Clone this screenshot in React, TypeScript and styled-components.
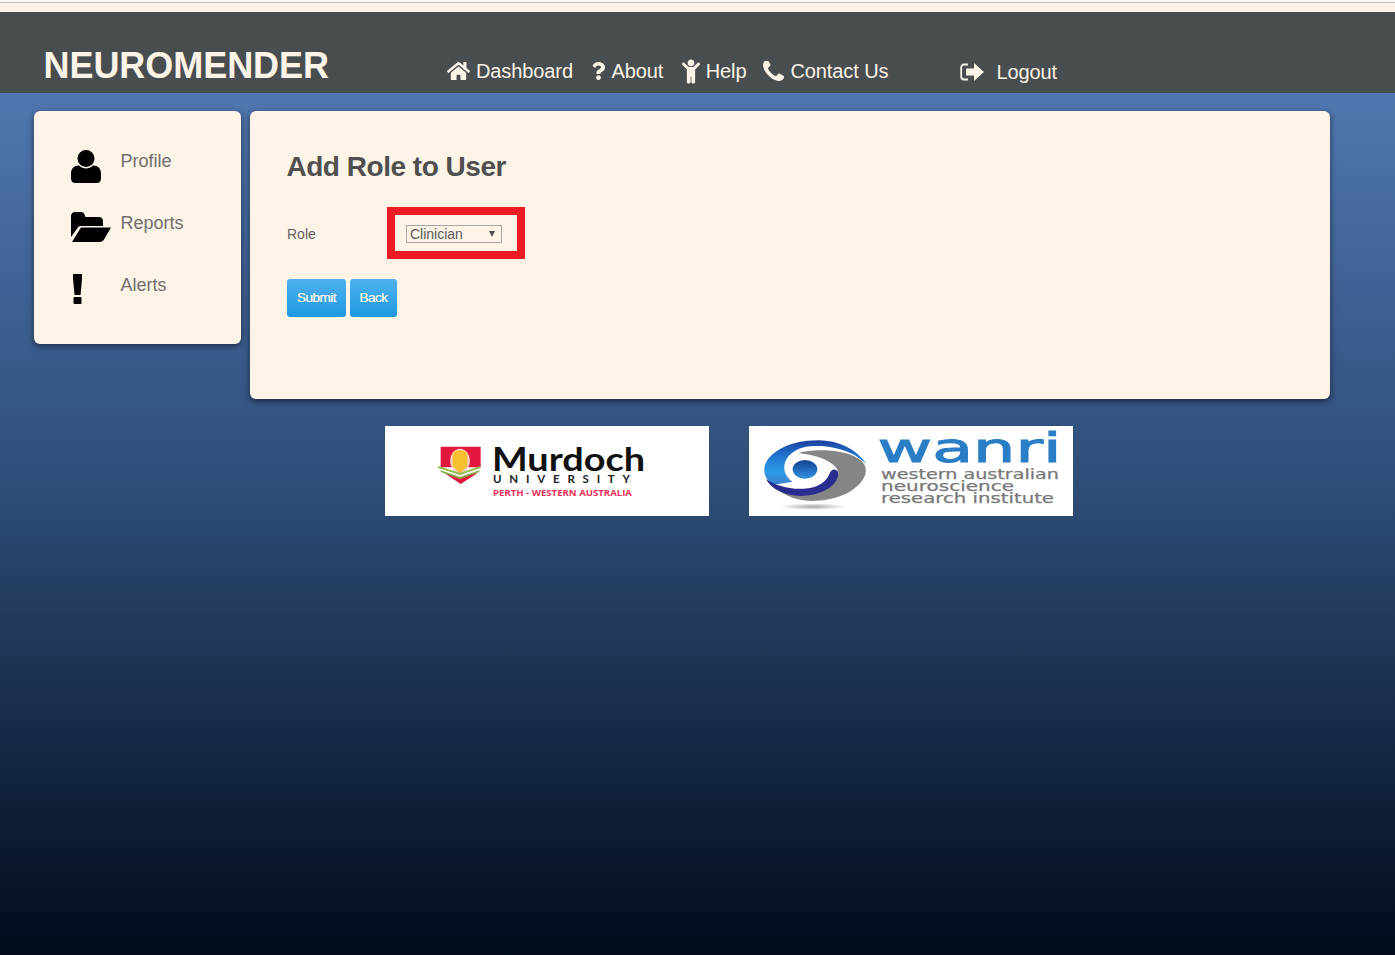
import React from "react";
import styled, { createGlobalStyle } from "styled-components";
import { FaHome, FaQuestion, FaChild } from "react-icons/fa";

const GlobalStyle = createGlobalStyle`
    html, body {
        margin: 0;
        padding: 0;
        height: 100%;
    }
    body {
        font-family: "Liberation Sans", Arial, sans-serif;
    }
`;

const Page = styled.div`
    display: flex;
    flex-direction: column;
    height: 955px;
    overflow: hidden;
    background: linear-gradient(to bottom, #5077b1 0, #5077b1 93px, #2d4b75 500px, #1f3656 650px, #10203a 800px, #010b1b 955px);
`;

const TopStrip = styled.div`
    height: 9px;
    border-top: 1px solid #c3c1c6;
    box-shadow: 0 -2px 0 #faf8f5;
    margin-top: 2px;
    background: #fdf3e7;
`;

const Header = styled.header`
    display: flex;
    align-items: flex-start;
    height: 81px;
    padding-left: 43.5px;
    background: #484d50;
    color: #fdf3e7;
`;

const Brand = styled.h1`
    margin: 33px 0 0;
    width: 403.5px;
    font-size: 36px;
    line-height: 42px;
    font-weight: bold;
    letter-spacing: -0.05px;
`;

const Nav = styled.nav`
    display: flex;
    align-items: flex-start;
    margin-top: 47px;
`;

const NavLink = styled.a<{ $gap?: number; $left?: number; $drop?: number }>`
    display: flex;
    align-items: center;
    height: 24px;
    margin-left: ${p => p.$left ?? 0}px;
    margin-top: ${p => p.$drop ?? 0}px;
    gap: ${p => p.$gap ?? 6}px;
    font-size: 20px;
    letter-spacing: -0.1px;
    color: #fdf3e7;
    white-space: nowrap;
`;

const NavIcon = styled.span<{ $w: number }>`
    display: flex;
    justify-content: center;
    width: ${p => p.$w}px;
    svg {
        display: block;
        fill: #fdf3e7;
    }
`;

const Content = styled.main`
    display: flex;
    align-items: flex-start;
    gap: 9px;
    padding: 18px 0 0 34px;
`;

const Card = styled.section`
    background: #fdf3e7;
    border-radius: 6px;
    box-shadow: 0 2px 6px rgba(0, 0, 0, .55);
    box-sizing: border-box;
`;

const Sidebar = styled(Card)`
    width: 207px;
    height: 233px;
    padding: 27px 0 0 37px;
`;

const SideItem = styled.a`
    display: flex;
    align-items: flex-start;
    height: 62px;
    font-size: 18px;
    line-height: 46px;
    color: #6f6f6f;
`;

const SideIcon = styled.span`
    display: block;
    width: 49.5px;
    margin-top: 12px;
    svg {
        display: block;
    }
`;

const Panel = styled(Card)`
    width: 1080px;
    height: 288px;
    padding: 39px 37px 0;
`;

const Title = styled.h2`
    margin: 0 0 0 -0.5px;
    font-size: 28px;
    line-height: 34px;
    font-weight: bold;
    letter-spacing: -0.48px;
    color: #4f4f4f;
`;

const FormRow = styled.div`
    display: flex;
    align-items: center;
    margin-top: 23px;
`;

const Label = styled.label`
    width: 100px;
    margin-top: 2px;
    font-size: 14px;
    color: #5f5f5f;
`;

const Highlight = styled.div`
    display: flex;
    width: 138px;
    height: 52px;
    box-sizing: border-box;
    border: 8px solid #ed1c24;
    padding: 10px 15px 8px 11px;
`;

const SelectWrap = styled.div`
    position: relative;
    width: 96px;
    height: 18px;
    &::after {
        content: "";
        position: absolute;
        right: 7px;
        top: 6px;
        border-style: solid;
        border-width: 6px 3.5px 0;
        border-color: #4f4f4f transparent transparent;
    }
`;

const Select = styled.select`
    appearance: none;
    display: block;
    width: 96px;
    height: 18px;
    box-sizing: border-box;
    margin: 0;
    padding: 0 0 0 3px;
    border: 1px solid #a6a6a6;
    border-radius: 0;
    background: #fdf3e7;
    font-family: "Liberation Sans", Arial, sans-serif;
    font-size: 14px;
    color: #5a5a5a;
`;

const Buttons = styled.div`
    display: flex;
    gap: 4px;
    margin-top: 20px;
`;

const Button = styled.button<{ $w: number }>`
    width: ${p => p.$w}px;
    height: 38px;
    padding: 0 0 2px;
    border: 0;
    border-radius: 3px;
    background: linear-gradient(to bottom, #4fb1ee, #1e99e2);
    font-family: "Liberation Sans", Arial, sans-serif;
    font-size: 13.5px;
    letter-spacing: -0.5px;
    color: #fdf3e7;
    text-shadow: 0 0 .5px #fdf3e7;
`;

const Logos = styled.div`
    display: flex;
    gap: 40px;
    padding: 27px 0 0 385px;
`;

const LogoBox = styled.div`
    width: 324px;
    height: 90px;
    background: #fff;
    svg {
        display: block;
    }
`;

const UserIcon = () => (
  <svg width="30" height="33" viewBox="0 0 30 33">
    <circle cx="15" cy="8.5" r="8.5" />
    <path d="M8 15.5c2 2 4.500 3 7 3s5-1 7-3c5 0 8 3 8 8v5c0 3-2 4.500-4 4.500H4c-2 0-4-1.500-4-4.500v-5c0-5 3-8 8-8z" />
  </svg>
);

const FolderIcon = () => (
  <svg width="40" height="30" viewBox="0 0 40 30">
    <path d="M0 25V4c0-2 1.500-4 4-4h6c2 0 3.500 1.500 4 4l.5 1H28c2 0 4 1.500 4 4v5H10c-1.500 0-2.500.5-3.500 2z" />
    <path d="M1 30l8-13c.5-1 1-1.500 2-1.500h29l-7 12c-1 1.500-2.500 2.500-4.500 2.500z" />
  </svg>
);

const AlertIcon = () => (
  <svg width="12" height="30" viewBox="0 0 12 30">
    <path d="M2 0h9v5l-1.500 16h-6L2 5z" />
    <rect x="2.500" y="23" width="8" height="7" rx="1" />
  </svg>
);

const PhoneIcon = () => (
  <svg width="21" height="21" viewBox="0 192 1408 1408">
    <path d="M1408 1240q0 27-10 70.500t-21 68.500q-21 50-122 106-94 51-186 51-27 0-53-3.500t-57.500-12.500-47-14.500-55.500-20.500-49-18q-98-35-175-83-127-79-264-216t-216-264q-48-77-83-175-3-9-18-49t-20.500-55.500-14.500-47-12.500-57.500-3.500-53q0-92 51-186 56-101 106-122 25-11 68.500-21t70.500-10q14 0 21 3 18 6 53 76 11 19 30 54t35 63.500 31 53.500q3 4 17.500 25t21.500 35.500 7 28.500q0 20-28.500 50t-62 55-62 53-28.500 46q0 9 5 22.500t8.500 20.500 14 24 11.500 19q76 137 174 235t235 174q2 1 19 11.500t24 14 20.500 8.500 22.500 5q18 0 46-28.500t53-62 55-62 50-28.500q14 0 28.500 7t35.500 21.500 25 17.500q25 15 53.500 31t63.500 35 54 30q70 35 76 53 3 7 3 21z" />
  </svg>
);

const LogoutIcon = () => (
  <svg width="24" height="18" viewBox="0 0 24 18">
    <path d="M8 1.500H4C2.500 1.500 1.200 2.800 1.200 4.500v9c0 1.700 1.300 3 2.800 3h4" fill="none" stroke="#fdf3e7" strokeWidth="1.800" />
    <path d="M6 5.500h8V0l10 9-10 9v-5.500H6z" />
  </svg>
);

const MurdochLogo = () => (
  <svg width="324" height="90" viewBox="0 0 324 90">
    <g transform="translate(49 14) scale(.3333)">
      <path d="M20 20h120v62H20z" fill="#e3173e" />
      <path d="M32 100h98l-50 32z" fill="#e3173e" />
      <ellipse cx="78" cy="62" rx="30" ry="36" fill="#f9cfc4" />
      <path d="M56 46c0-9 10-15 22-15s22 6 22 15v32l-22 22-22-22z" fill="#f6c02f" />
      <path d="M12 78l66 20 62-20v7l-62 20-66-20z" fill="#8fbf4c" />
      <path d="M12 85l66 20 62-20v6l-62 21-66-21z" fill="#fff" />
      <path d="M20 91l58 20 58-20v5l-58 21-58-21z" fill="#7fae45" />
    </g>
    <text x="107" y="45" fontFamily="Lato, sans-serif" fontSize="33" fontWeight="700" textLength="153" lengthAdjust="spacingAndGlyphs" fill="#111">Murdoch</text>
    <text x="108" y="57" fontFamily="Lato, sans-serif" fontSize="11.500" fontWeight="700" textLength="137" fill="#222">UNIVERSITY</text>
    <text x="108" y="70" fontFamily="'Open Sans', sans-serif" fontSize="8.500" fontWeight="700" textLength="139" lengthAdjust="spacingAndGlyphs" fill="#e8305a">PERTH - WESTERN AUSTRALIA</text>
  </svg>
);

const WanriLogo = () => (
  <svg width="324" height="90" viewBox="0 0 324 90">
    <defs>
      <linearGradient id="swirlBlue" x1="0" y1="0" x2="0" y2="1">
        <stop offset="0" stopColor="#1d3f9e" />
        <stop offset=".3" stopColor="#1e6fcb" />
        <stop offset=".7" stopColor="#2c9be8" />
        <stop offset="1" stopColor="#3f7fd0" />
      </linearGradient>
      <linearGradient id="swirlBall" x1="0" y1="0" x2="0" y2="1">
        <stop offset="0" stopColor="#123f8f" />
        <stop offset="1" stopColor="#2f93e4" />
      </linearGradient>
      <radialGradient id="swirlShadow">
        <stop offset="0" stopColor="#a8a8a8" />
        <stop offset="1" stopColor="#fff" />
      </radialGradient>
    </defs>
    <g transform="translate(6 6) scale(.3333)">
      <ellipse cx="175" cy="224" rx="100" ry="10" fill="url(#swirlShadow)" />
      <path d="M335 95C300 50 250 25 190 25 100 25 28 65 28 115c0 20 12 33 27 43l55-8 60-90 130 10z" fill="url(#swirlBlue)" />
      <path d="M300 70c-50-28-110-32-150-25-45 10-65 40-62 67 4 33 42 53 77 53 30 0 50-15 60-40l15-10-40-40z" fill="#fff" />
      <path d="M130 63c40-13 135-13 180 17 25 15 30 40 12 65-27 40-87 62-152 62-50 0-100-22-135-62 35 25 75 35 115 33 50-3 90-23 100-53 3-20-35-53-120-62z" fill="#858585" />
      <path d="M33 140c27 20 67 32 112 30 45-3 70-20 80-48 3-10 15-14 23-4 6 12-3 42-43 60-45 20-95 17-130 0-20-8-35-23-42-38z" fill="#2a2c90" />
      <ellipse cx="150" cy="112" rx="37" ry="28" fill="url(#swirlBall)" />
    </g>
    <text x="128.500" y="36" fontFamily="'DejaVu Sans', sans-serif" fontSize="40" textLength="184" lengthAdjust="spacingAndGlyphs" fill="#2a7ec6" stroke="#2a7ec6" strokeWidth="1">wanri</text>
    <g fontFamily="'DejaVu Sans', sans-serif" fontSize="14.500" fill="#787878" stroke="#787878" strokeWidth=".25">
      <text x="132" y="53" textLength="178" lengthAdjust="spacingAndGlyphs">western australian</text>
      <text x="132" y="65" textLength="133" lengthAdjust="spacingAndGlyphs">neuroscience</text>
      <text x="132" y="77" textLength="173" lengthAdjust="spacingAndGlyphs">research institute</text>
    </g>
  </svg>
);

const App: React.FC = () => {
  return (
    <Page>
      <GlobalStyle />
      <TopStrip />
      <Header>
        <Brand>NEUROMENDER</Brand>
        <Nav>
          <NavLink>
            <NavIcon $w={23}><FaHome size={24} /></NavIcon>
            Dashboard
          </NavLink>
          <NavLink $left={18.5} $gap={5}>
            <NavIcon $w={15}><FaQuestion size={18} /></NavIcon>
            About
          </NavLink>
          <NavLink $left={18.5} $gap={6}>
            <NavIcon $w={18}><FaChild size={25} /></NavIcon>
            Help
          </NavLink>
          <NavLink $left={17} $gap={6}>
            <NavIcon $w={21}><PhoneIcon /></NavIcon>
            Contact Us
          </NavLink>
          <NavLink $left={72} $gap={12} $drop={1}>
            <NavIcon $w={24}><LogoutIcon /></NavIcon>
            Logout
          </NavLink>
        </Nav>
      </Header>
      <Content>
        <Sidebar>
          <SideItem><SideIcon><UserIcon /></SideIcon>Profile</SideItem>
          <SideItem><SideIcon><FolderIcon /></SideIcon>Reports</SideItem>
          <SideItem><SideIcon><AlertIcon /></SideIcon>Alerts</SideItem>
        </Sidebar>
        <Panel>
          <Title>Add Role to User</Title>
          <FormRow>
            <Label>Role</Label>
            <Highlight>
              <SelectWrap>
                <Select defaultValue="Clinician">
                  <option>Clinician</option>
                </Select>
              </SelectWrap>
            </Highlight>
          </FormRow>
          <Buttons>
            <Button $w={59}>Submit</Button>
            <Button $w={47}>Back</Button>
          </Buttons>
        </Panel>
      </Content>
      <Logos>
        <LogoBox><MurdochLogo /></LogoBox>
        <LogoBox><WanriLogo /></LogoBox>
      </Logos>
    </Page>
  );
};

export default App;
